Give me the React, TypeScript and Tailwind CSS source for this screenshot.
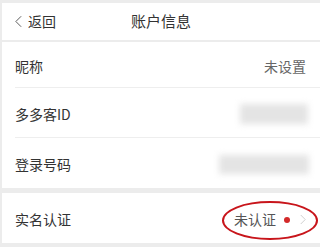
import React from "react";

const FONT = { fontFamily: '"Noto Sans CJK SC", "Noto Sans", sans-serif' };

function Chevron({ className }: { className?: string }) {
  return (
    <svg viewBox="0 0 8 14" className={className} fill="none">
      <path d="M1 1l6 6-6 6" stroke="currentColor" strokeWidth="1.2" />
    </svg>
  );
}

function Row({
  label,
  h,
  children,
}: {
  label: string;
  h: string;
  children?: React.ReactNode;
}) {
  return (
    <div className={`flex items-center justify-between pl-[13px] pr-[14px] ${h}`}>
      <span className="text-[14px] text-[#333] pt-[3px]">{label}</span>
      {children}
    </div>
  );
}

export default function App() {
  return (
    <div
      className="w-[320px] h-[247px] bg-[#ececec] pt-[3px] pl-[2px] overflow-hidden relative"
      style={FONT}
    >
      {/* Header */}
      <div className="h-[37px] bg-white flex items-center relative">
        <div className="flex items-center pl-[13px] text-[#333]">
          <svg viewBox="0 0 8 14" className="w-[7px] h-[13px] text-[#555]" fill="none">
            <path d="M7 1L1 7l6 6" stroke="currentColor" strokeWidth="1.1" />
          </svg>
          <span className="text-[14px] ml-[6px]">返回</span>
        </div>
        <span className="absolute left-0 right-0 text-center text-[15px] text-[#333] pointer-events-none">
          账户信息
        </span>
      </div>

      {/* List */}
      <div className="mt-[2px] bg-white">
        <Row label="昵称" h="h-[45px]">
          <span className="text-[14px] text-[#666] pt-[3px]">未设置</span>
        </Row>
        <div className="ml-[13px] h-px bg-[#eeeeee]" />
        <Row label="多多客ID" h="h-[49px]">
          <div className="w-[68px] h-[20px] bg-[#e4e4e4] blur-[3px] mr-[-2px] mt-[2px]" />
        </Row>
        <div className="ml-[13px] h-px bg-[#eeeeee]" />
        <Row label="登录号码" h="h-[50px]">
          <div className="w-[90px] h-[19px] bg-[#e4e4e4] blur-[3px] mr-[-3px] mt-[2px]" />
        </Row>
      </div>
      <div className="h-[5px]" />
      <div className="bg-white">
        <Row label="实名认证" h="h-[50px]">
          <div className="flex items-center pt-[3px]">
            <span className="text-[14px] text-[#555]">未认证</span>
            <span className="w-[6px] h-[6px] rounded-full bg-[#d32a2a] ml-[8px]" />
            <Chevron className="w-[6px] h-[11px] text-[#cccccc] ml-[10px]" />
          </div>
        </Row>
      </div>

      {/* Annotation */}
      <div className="absolute left-[222px] top-[201px] w-[96px] h-[39px] rounded-[50%] border-2 border-[#c8151b]" />
    </div>
  );
}
